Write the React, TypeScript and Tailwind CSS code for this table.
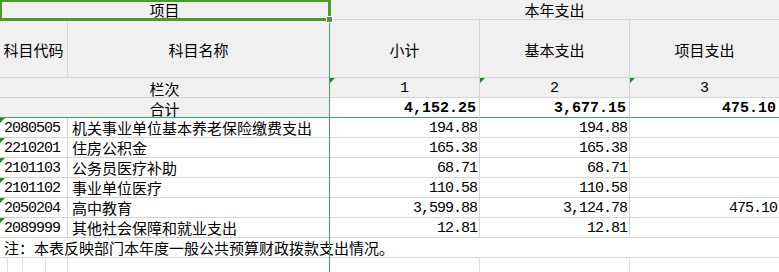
import React from 'react';

const rows = [
  { code: '2080505', name: '机关事业单位基本养老保险缴费支出', total: '194.88', basic: '194.88', project: '' },
  { code: '2210201', name: '住房公积金', total: '165.38', basic: '165.38', project: '' },
  { code: '2101103', name: '公务员医疗补助', total: '68.71', basic: '68.71', project: '' },
  { code: '2101102', name: '事业单位医疗', total: '110.58', basic: '110.58', project: '' },
  { code: '2050204', name: '高中教育', total: '3,599.88', basic: '3,124.78', project: '475.10' },
  { code: '2089999', name: '其他社会保障和就业支出', total: '12.81', basic: '12.81', project: '' },
];

const cjk = "font-['Noto_Sans_CJK_SC',sans-serif] text-[15px]";
const mono = "font-['Liberation_Mono','Noto_Sans_CJK_SC',monospace] text-[15px] tracking-[-1px]";
const monoBold = "font-['Liberation_Mono','Noto_Sans_CJK_SC',monospace] text-[15px] font-bold";

function Tri() {
  return (
    <span className="absolute left-0 top-0 w-0 h-0 border-t-[5px] border-r-[5px] border-t-[#1f8a1f] border-r-transparent" />
  );
}

export default function App() {
  const cell = 'relative flex items-center border-r border-b border-[#d5d5d5] leading-5 text-black whitespace-nowrap overflow-hidden';
  const head = `${cell} bg-[#f0f0f0] justify-center ${cjk}`;

  return (
    <div className="relative w-[779px] h-[272px] overflow-hidden bg-white">
      <div className="grid grid-cols-[68px_262px_150px_150px_150px]">
        {/* row 1 */}
        <div className={`${head} col-span-2 h-[20px] pt-[1px]`}>项目</div>
        <div className={`${head} col-span-3 h-[20px] pt-[1px]`}>本年支出</div>

        {/* row 2 */}
        <div className={`${head} h-[58px] pt-[3px]`}>科目代码</div>
        <div className={`${head} h-[58px] pt-[3px]`}>科目名称</div>
        <div className={`${head} h-[58px] pt-[3px]`}>小计</div>
        <div className={`${head} h-[58px] pt-[3px]`}>基本支出</div>
        <div className={`${head} h-[58px] pt-[3px]`}>项目支出</div>

        {/* row 3 */}
        <div className={`${head} col-span-2 h-[20px] pt-[2px]`}>栏次</div>
        {['1', '2', '3'].map((n) => (
          <div key={n} className={`${cell} bg-[#f0f0f0] justify-center h-[20px] pt-[3px] ${mono} tracking-normal`}>
            <Tri />
            {n}
          </div>
        ))}

        {/* row 4 */}
        <div className={`${head} col-span-2 h-[20px] pt-[2px] border-b-[#3aa96f]`}>合计</div>
        <div className={`${cell} justify-end pr-[3px] h-[20px] pt-[2px] border-b-[#3aa96f] ${monoBold}`}>4,152.25</div>
        <div className={`${cell} justify-end pr-[3px] h-[20px] pt-[2px] border-b-[#3aa96f] ${monoBold}`}>3,677.15</div>
        <div className={`${cell} justify-end pr-[3px] h-[20px] pt-[2px] border-b-[#3aa96f] ${monoBold}`}>475.10</div>

        {/* data rows */}
        {rows.map((r) => (
          <React.Fragment key={r.code}>
            <div className={`${cell} h-[20px] pl-[4px] pt-[2px] ${mono}`}>
              <Tri />
              {r.code}
            </div>
            <div className={`${cell} h-[20px] pl-[4px] pt-[1px] ${cjk}`}>{r.name}</div>
            <div className={`${cell} justify-end pr-[2px] h-[20px] pt-[2px] ${mono}`}>{r.total}</div>
            <div className={`${cell} justify-end pr-[2px] h-[20px] pt-[2px] ${mono}`}>{r.basic}</div>
            <div className={`${cell} justify-end pr-[2px] h-[20px] pt-[2px] ${mono}`}>{r.project}</div>
          </React.Fragment>
        ))}

        {/* note */}
        <div className={`col-span-5 flex items-center h-[20px] pl-[4px] pt-[1px] border-b border-[#d5d5d5] whitespace-nowrap ${cjk}`}>
          注：本表反映部门本年度一般公共预算财政拨款支出情况。
        </div>

        {/* partial last row */}
        <div className="col-span-5 flex h-[14px]">
          <div className="w-[8px] border-r border-[#e0e0e0]" />
          <div className="w-[15px] border-r border-[#e0e0e0]" />
          <div className="w-[23px] border-r border-[#e0e0e0]" />
          <div className="w-[22px] border-r border-[#e0e0e0]" />
          <div className="w-[262px]" />
          <div className="w-[150px] border-r border-[#e0e0e0]" />
          <div className="w-[150px] border-r border-[#e0e0e0]" />
          <div className="w-[150px]" />
        </div>
      </div>

      {/* frozen pane line */}
      <div className="absolute left-[329px] top-[22px] bottom-0 w-px bg-[#3aa96f]" />

      {/* selection */}
      <div className="absolute left-[-1px] top-[-1px] w-[332px] h-[22px] border-[3px] border-[#4c9a2a]" />
      <div className="absolute left-[326px] top-[16px] w-[7px] h-[7px] bg-[#4c9a2a] border border-white" />
    </div>
  );
}
